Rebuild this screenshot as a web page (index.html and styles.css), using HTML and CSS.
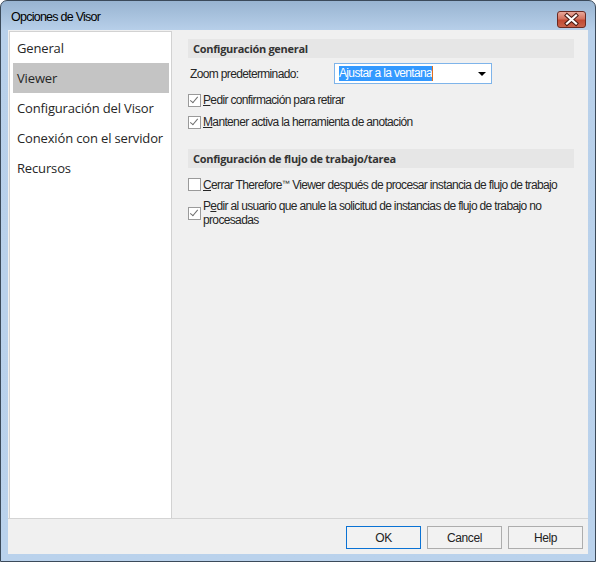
FILE: index.html
```html
<!DOCTYPE html>
<html lang="es">
<head>
    <meta charset="UTF-8">
    <title>Opciones de Visor</title>
    <link rel="stylesheet" href="styles.css">
</head>
<body>
    <div class="window">
        <div class="titlebar">
            <span class="title">Opciones de Visor</span>
            <span class="close">
                <svg width="29" height="17" viewBox="0 0 29 17">
                    <path d="M10 4.5 L19 12.5 M19 4.5 L10 12.5" stroke="#4a1c14" stroke-width="4.2" stroke-linecap="square"/>
                    <path d="M10 4.5 L19 12.5 M19 4.5 L10 12.5" stroke="#ffffff" stroke-width="2.2" stroke-linecap="square"/>
                </svg>
            </span>
        </div>

        <div class="client">
            <div class="main">
                <ul class="nav">
                    <li>General</li>
                    <li class="active">Viewer</li>
                    <li>Configuración del Visor</li>
                    <li>Conexión con el servidor</li>
                    <li>Recursos</li>
                </ul>

                <div class="page">
                    <div class="group-title">Configuración general</div>

                    <div class="field">
                        <span class="field-label">Zoom predeterminado:</span>
                        <div class="combo">
                            <span class="combo-text">Ajustar a la ventana</span>
                            <span class="caret"></span>
                            <span class="arrow"></span>
                        </div>
                    </div>

                    <div class="check first">
                        <span class="box checked"></span>
                        <span class="check-text"><u>P</u>edir confirmación para retirar</span>
                    </div>
                    <div class="check">
                        <span class="box checked"></span>
                        <span class="check-text"><u>M</u>antener activa la herramienta de anotación</span>
                    </div>

                    <div class="group-title second">Configuración de flujo de trabajo/tarea</div>

                    <div class="check first">
                        <span class="box"></span>
                        <span class="check-text"><u>C</u>errar Therefore<span class="tm">™</span> Viewer después de procesar instancia de flujo de trabajo</span>
                    </div>
                    <div class="check tall">
                        <span class="box checked"></span>
                        <span class="check-text">P<u>e</u>dir al usuario que anule la solicitud de instancias de flujo de trabajo no<br>procesadas</span>
                    </div>
                </div>
            </div>

            <div class="footer">
                <button class="default">OK</button>
                <button>Cancel</button>
                <button>Help</button>
            </div>
        </div>
    </div>
</body>
</html>
```

FILE: styles.css
```css
body {
    margin: 0;
    padding: 0;
    background: #ffffff;
}

.window {
    width: 596px;
    height: 562px;
    box-sizing: border-box;
    border: 1px solid #3b4a5a;
    border-radius: 7px 7px 0 0;
    padding: 0 7px 7px 7px;
    background: linear-gradient(#98b4d1 0, #b8d0ea 30px, #bad2ec 100%);
    display: flex;
    flex-direction: column;
}

.titlebar {
    height: 29px;
    display: flex;
    align-items: center;
    justify-content: space-between;
}

.title {
    font-family: "Liberation Sans", Arial, sans-serif;
    font-size: 12.5px;
    letter-spacing: -0.75px;
    color: #000;
    padding-left: 3px;
    padding-top: 3px;
}

.close {
    width: 29px;
    height: 17px;
    box-sizing: border-box;
    border: 1px solid #6b2a22;
    border-radius: 3px;
    background: linear-gradient(#e9a89a 0, #d4735f 45%, #c24a33 55%, #c9644c 100%);
    margin-top: 8px;
    margin-right: 2px;
    display: flex;
    align-items: center;
    justify-content: center;
    overflow: hidden;
}

.close svg {
    display: block;
    margin: -1px;
}

.client {
    flex: 1;
    background: #f0f0f0;
    display: flex;
    flex-direction: column;
}

.main {
    height: 489px;
    box-sizing: border-box;
    border-bottom: 1px solid #d4d4d4;
    padding: 1px 0 0 1px;
    display: flex;
}

.nav {
    width: 163px;
    box-sizing: border-box;
    margin: 0;
    padding: 1px 2px 0 3px;
    list-style: none;
    background: #fff;
    border: 1px solid #d2d2d2;
    border-bottom: none;
}

.nav li {
    height: 30px;
    line-height: 30px;
    padding-left: 4px;
    font-family: "Open Sans", sans-serif;
    font-size: 13px;
    letter-spacing: -0.15px;
    color: #262626;
    white-space: nowrap;
}

.nav li.active {
    background: #c4c4c4;
}

.page {
    flex: 1;
    padding: 8px 14px 0 16px;
    font-family: "Liberation Sans", Arial, sans-serif;
    font-size: 12px;
    letter-spacing: -0.65px;
    color: #262626;
}

.group-title {
    height: 19px;
    line-height: 19px;
    padding-left: 5px;
    background: #e6e6e6;
    font-family: "Open Sans", sans-serif;
    font-weight: bold;
    font-size: 11px;
    letter-spacing: -0.3px;
    color: #333;
}

.group-title.second {
    margin-top: 16px;
}

.field {
    margin-top: 5px;
    height: 21px;
    display: flex;
    align-items: center;
}

.field-label {
    width: 144px;
    padding-left: 2px;
}

.combo {
    width: 158px;
    height: 21px;
    box-sizing: border-box;
    border: 1px solid #7eb4ea;
    background: #fff;
    display: flex;
    align-items: center;
    padding-left: 4px;
    position: relative;
}

.combo-text {
    background: #3399ff;
    color: #fff;
    line-height: 15px;
}

.caret {
    width: 1px;
    height: 15px;
    background: #e07020;
}

.arrow {
    position: absolute;
    right: 5px;
    top: 8px;
    width: 0;
    height: 0;
    border-left: 4px solid transparent;
    border-right: 4px solid transparent;
    border-top: 4px solid #000;
}

.check {
    height: 22px;
    display: flex;
    align-items: center;
    gap: 2px;
}

.check.first {
    margin-top: 5px;
}

.check.tall {
    height: 28px;
    margin-top: 4px;
}

.check-text {
    line-height: 14px;
    white-space: nowrap;
}

.tm {
    font-size: 8px;
    vertical-align: 3px;
    letter-spacing: -0.3px;
}

.box {
    width: 13px;
    height: 13px;
    box-sizing: border-box;
    border: 1px solid #9a9a9a;
    background: #fff;
    flex: none;
    position: relative;
}

.box.checked::after {
    content: "";
    position: absolute;
    left: 3px;
    top: 0px;
    width: 3px;
    height: 7px;
    border-right: 1.5px solid #6e6e6e;
    border-bottom: 1.5px solid #6e6e6e;
    transform: rotate(40deg);
}

.footer {
    flex: 1;
    display: flex;
    justify-content: flex-end;
    gap: 6px;
    padding: 7px 5px 0 0;
    align-items: flex-start;
}

.footer button {
    width: 75px;
    height: 23px;
    border: 1px solid #adadad;
    background: #f2f2f2;
    font-family: "Liberation Sans", Arial, sans-serif;
    font-size: 12px;
    letter-spacing: -0.4px;
    color: #222;
    padding: 0;
}

.footer button.default {
    border-color: #0a72d4;
}
```
